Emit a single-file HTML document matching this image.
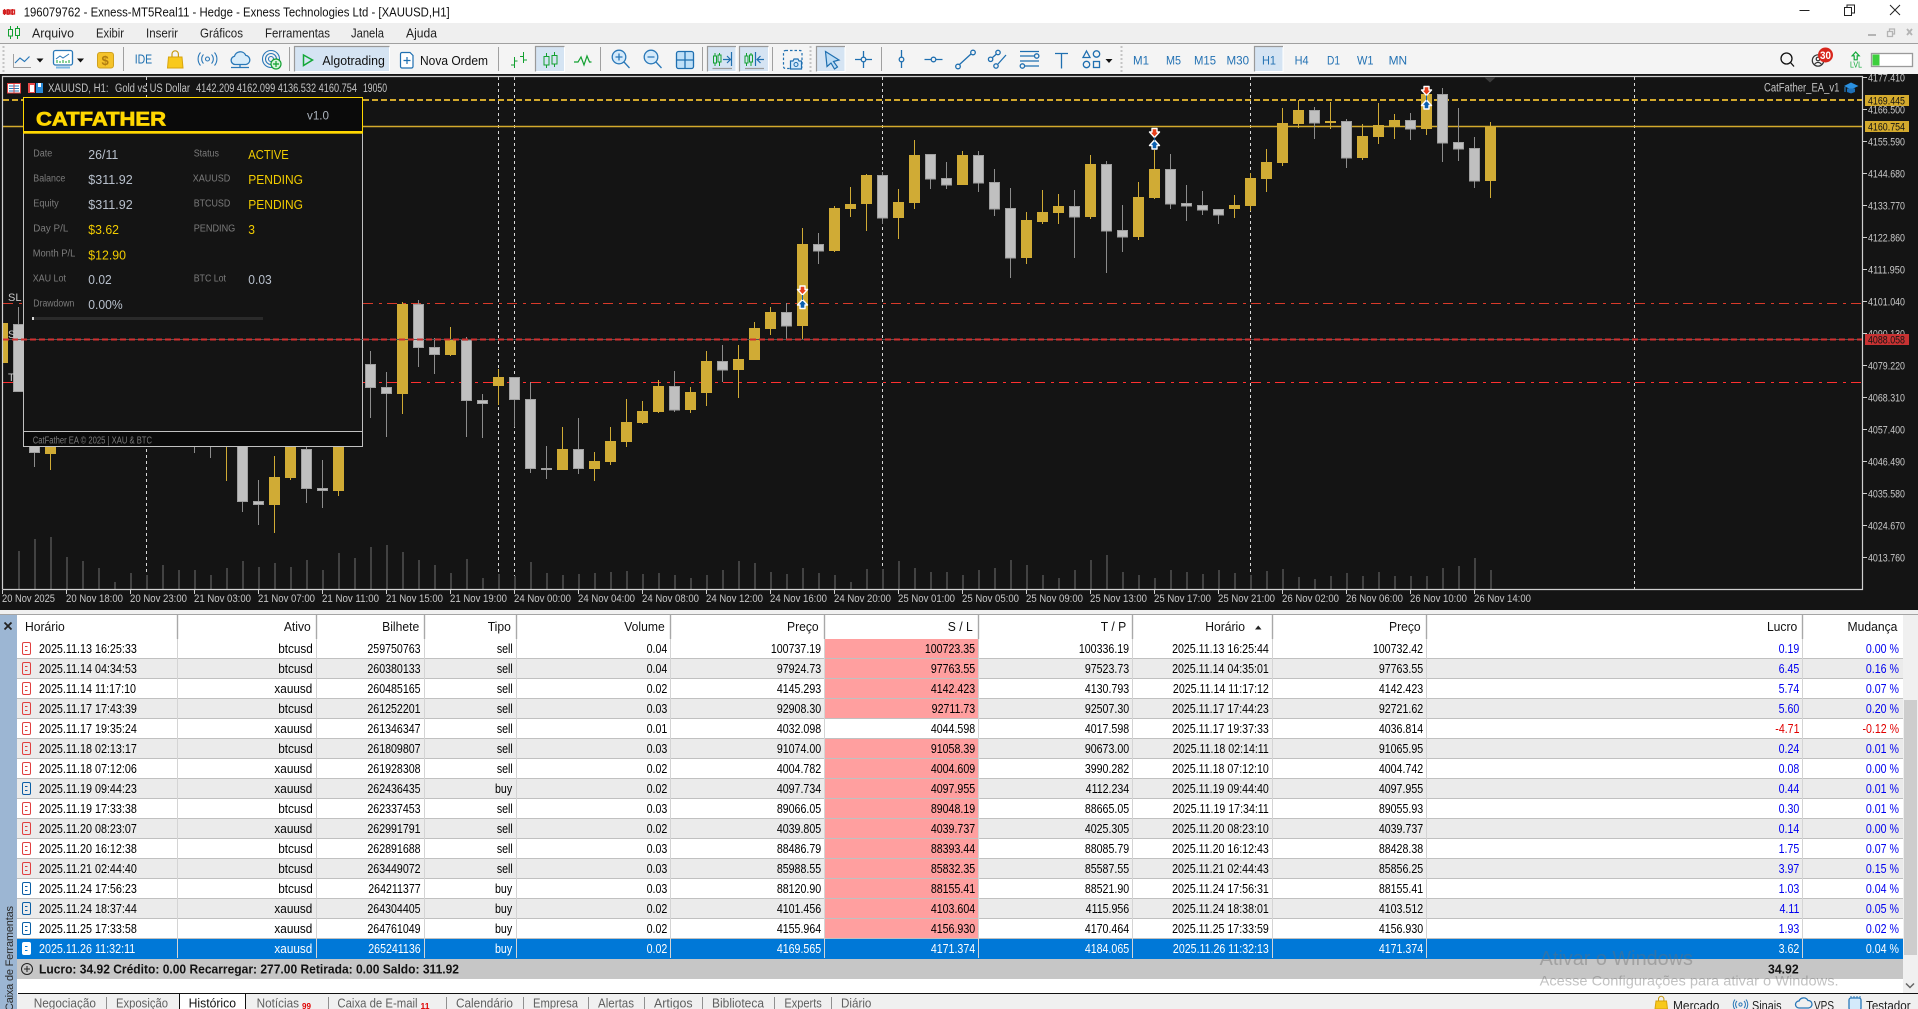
<!DOCTYPE html>
<html lang="pt"><head><meta charset="utf-8"><title>MT5</title>
<style>
html,body{margin:0;padding:0;background:#fff}
#p{position:relative;width:1918px;height:1009px;overflow:hidden;font-family:"Liberation Sans",sans-serif;background:#fff}
svg{position:absolute;left:0;top:0;font-family:"Liberation Sans",sans-serif}
#t{position:absolute;left:17px;top:639px;width:1886px}
.r{position:relative;height:20px;box-sizing:border-box;border-bottom:1px solid #c0c0c0;font-size:12.5px;line-height:20px;color:#000;background:#fff;white-space:nowrap}
.r:nth-child(even){background:#ebebeb}
.r.s::before{content:"";position:absolute;left:808px;width:153px;top:0;height:19px;background:#ff9f9f}
.r::after{--c:#e04040;content:"";position:absolute;left:5px;top:3px;width:7px;height:11px;border:1.5px solid var(--c);border-radius:2px;background:linear-gradient(var(--c),var(--c)) center 3px/2.5px 1px no-repeat,linear-gradient(var(--c),var(--c)) center 7px/2.5px 1px no-repeat}
.r.b::after{--c:#0a5fa5}
.r span{position:absolute;top:0;transform:scaleX(.85);transform-origin:100% 50%}
.r span:nth-child(1){left:22px;transform:scaleX(.86);transform-origin:0 50%}
.r span:nth-child(2){right:1590.5px;transform:scaleX(.94)}
.r span:nth-child(3){right:1482.5px}
.r span:nth-child(4){right:1390.4px}
.r span:nth-child(5){right:1236px}
.r span:nth-child(6){right:1082px}
.r span:nth-child(7){right:928px}
.r span:nth-child(8){right:774.2px}
.r span:nth-child(9){right:634px}
.r span:nth-child(10){right:480.3px}
.r span:nth-child(11){right:104px;color:#0000f0}
.r span:nth-child(12){right:4.2px;color:#0000f0}
.r span.n{color:#e00000!important}
.r.x{background:#0078d7!important;color:#fff;border-bottom:0}
.r.x span{color:#fff!important}
.r.x::after{--c:#fff;background:linear-gradient(#0078d7,#0078d7) center 3px/2.5px 1px no-repeat,linear-gradient(#0078d7,#0078d7) center 7px/2.5px 1px no-repeat,#fff}
#h{position:absolute;left:17px;top:615px;width:1886px;height:24px;background:#fff;font-size:12.5px;line-height:24px;color:#111;white-space:nowrap}
#h span{position:absolute;top:0;transform:scaleX(.97);transform-origin:100% 50%}
</style></head><body><div id="p">
<svg width="1918" height="1009" viewBox="0 0 1918 1009" xmlns="http://www.w3.org/2000/svg">
<!-- bars -->
<rect width="1918" height="23" fill="#fff"/>
<rect y="23" width="1918" height="20" fill="#efefef"/>
<rect y="43" width="1918" height="1" fill="#a0a0a0"/>
<rect y="44" width="1918" height="30" fill="#f4f4f4"/>
<!-- title icon -->
<g fill="none" stroke="#d42020" stroke-width="1.300"><path d="M4.500 9v6M3.500 10.500h2v3h-2zM8 9v6M7 10h2.500v4H7zM12.500 9v6M11 10h3.500v4H11z"/></g>
<text x="23.700" y="16.500" font-size="12.500" fill="#111" textLength="426" lengthAdjust="spacingAndGlyphs">196079762 - Exness-MT5Real11 - Hedge - Exness Technologies Ltd - [XAUUSD,H1]</text>
<g stroke="#222" fill="none" stroke-width="1"><path d="M1799.500 10.500h10"/><path d="M1844.500 7.500h7v8h-7zM1847 7.500v-2.500h7.500v8h-3"/><path d="M1890 5l10 10M1900 5l-10 10"/></g>
<!-- menu -->
<g fill="none" stroke="#12a030" stroke-width="1"><path d="M10.500 26v3M10.500 36v3M8.500 29.500h4v6.500h-4zM17.500 26v2.500M17.500 35.500v3.500M15.500 28.500h4v7h-4z"/></g>
<g font-size="12.500" fill="#222">
<text x="32" y="37.500" textLength="42" lengthAdjust="spacingAndGlyphs">Arquivo</text>
<text x="96" y="37.500" textLength="28" lengthAdjust="spacingAndGlyphs">Exibir</text>
<text x="146" y="37.500" textLength="32" lengthAdjust="spacingAndGlyphs">Inserir</text>
<text x="200" y="37.500" textLength="43" lengthAdjust="spacingAndGlyphs">Gráficos</text>
<text x="265" y="37.500" textLength="65" lengthAdjust="spacingAndGlyphs">Ferramentas</text>
<text x="351" y="37.500" textLength="33" lengthAdjust="spacingAndGlyphs">Janela</text>
<text x="406" y="37.500" textLength="31" lengthAdjust="spacingAndGlyphs">Ajuda</text>
</g>
<g fill="#b4b4b4"><rect x="1868" y="34" width="8" height="2"/></g>
<g fill="none" stroke="#b4b4b4" stroke-width="1.300"><path d="M1887.500 31.500h5v5h-5zM1889.500 31v-2h5v5h-2"/><path d="M1907 29l5 6M1912 29l-5 6" stroke-width="1.800"/></g>
<!-- toolbar pressed boxes -->
<g fill="#d5e4f3" stroke="#fff"><rect x="294.500" y="46.500" width="95" height="25"/><rect x="535.500" y="46.500" width="29" height="25"/><rect x="707.500" y="46.500" width="28.500" height="25"/><rect x="739.500" y="46.500" width="29" height="25"/><rect x="816.500" y="46.500" width="28.500" height="25"/><rect x="1254.500" y="46.500" width="28.500" height="25"/></g>
<path d="M294.500 71.500V46.500H389.500M535.500 71.500V46.500H564.500M707.500 71.500V46.500H736M739.500 71.500V46.500H768.500M816.500 71.500V46.500H845M1254.500 71.500V46.500H1283" fill="none" stroke="#9a9a9a" stroke-width="1.200"/>
<g stroke="#a0a0a0" fill="none"><path d="M123.500 47v24M289.500 47v24M498.500 47v24M600.500 47v24M702.500 47v24M772.500 47v24M881.500 47v24"/></g>
<path d="M3.500 46v26M810.500 46v26M1121.500 46v26" stroke="#c4c4c4" stroke-width="2" stroke-dasharray="2 2" fill="none"/>
<!-- toolbar icons -->
<path d="M13.500 54v13.500H31" stroke="#a0a0a0" fill="none"/>
<path d="M15 63l5-5 4.500 3.500 5-5" stroke="#2a78b8" stroke-width="1.200" fill="none"/>
<path d="M36.500 58.500h7l-3.500 4zM77 58.500h7l-3.500 4zM1105.500 59h7l-3.500 4z" fill="#111"/>
<rect x="53.500" y="50.500" width="19" height="14.500" rx="2" fill="#fff" stroke="#2a78b8" stroke-width="1.300"/>
<path d="M56 59l4-3 3 2 6-4" stroke="#2a78b8" fill="none"/>
<path d="M57 63v-3M60 63v-2M63 63v-3M66 63v-2M69 63v-3" stroke="#12a030" fill="none"/>
<path d="M56 67.500h14" stroke="#7cb8e4" stroke-width="2"/>
<rect x="97.500" y="52.500" width="16" height="15.500" rx="2.500" fill="#f5c32a" stroke="#cfa11e"/>
<text x="101.500" y="65" font-size="13" font-weight="bold" fill="#b07c10">$</text>
<text x="134.700" y="63.500" font-size="12.500" fill="#1d6fb0" textLength="17.500" lengthAdjust="spacingAndGlyphs">IDE</text>
<path d="M168.500 57h13.500l1 11h-15.500z" fill="#f8c91c" stroke="#d8a40e"/>
<path d="M172 57v-3a3.200 3.200 0 0 1 6.400 0v3" fill="none" stroke="#c69a12" stroke-width="1.200"/>
<g fill="none" stroke="#2a78b8" stroke-width="1.100"><circle cx="207.500" cy="59" r="2"/><path d="M203.500 54.500a6.500 6.500 0 0 0 0 9M211.500 54.500a6.500 6.500 0 0 1 0 9M200.500 52.500a10 10 0 0 0 0 13M214.500 52.500a10 10 0 0 1 0 13"/></g>
<path d="M235 64.500a4.200 4.200 0 0 1-.5-8.300 6 6 0 0 1 11.300-.8 4.600 4.600 0 0 1 .2 9.100zM240 64.500V67M231 67.500h18" fill="#d8ecfa" stroke="#2a78b8" stroke-width="1.300"/>
<g fill="none" stroke="#2a78b8" stroke-width="1.100"><circle cx="271" cy="59" r="8.500"/><circle cx="271" cy="59" r="5.500"/><circle cx="271" cy="59" r="2.500"/></g>
<circle cx="276" cy="64" r="5" fill="#d8f4dc" stroke="#12a030" stroke-width="1.200"/><path d="M276 61v6M273 64h6" stroke="#12a030" stroke-width="1.200"/>
<path d="M303.500 55l9 5-9 5.500z" fill="none" stroke="#14a838" stroke-width="1.500"/>
<text x="322.400" y="65" font-size="12.500" fill="#111" textLength="62.500" lengthAdjust="spacingAndGlyphs">Algotrading</text>
<path d="M400.500 54a1.500 1.500 0 0 1 1.500-1.500h8l3 3V66.500a1.500 1.500 0 0 1-1.500 1.500H402a1.500 1.500 0 0 1-1.500-1.500z" fill="#fff" stroke="#1f6fb0" stroke-width="1.200"/><path d="M407 57v7M403.500 60.500h7" stroke="#1f6fb0" stroke-width="1.200"/>
<text x="420" y="65" font-size="12.500" fill="#111" textLength="68" lengthAdjust="spacingAndGlyphs">Nova Ordem</text>
<g fill="none" stroke="#12a030" stroke-width="1"><path d="M514.500 57v11M511 65h3.500M514.500 61h3M523.500 52v11M520 56.500h3.500M523.500 60h3.500"/><path d="M546.500 53v3M546.500 65v3M544 56.500h5v8.500h-5zM554.500 52v3M554.500 64v3M552 55.500h5v8.500h-5z"/><path d="M574 62h4l3-5 3 8 3-9 2.500 6h2" stroke-width="1.200"/></g>
<g fill="#d4eafb" stroke="#2a78b8" stroke-width="1.300"><circle cx="619" cy="57" r="6.800"/><path d="M624 62l5.500 6M615.500 57h7M619 53.500v7" fill="none"/><circle cx="651" cy="57" r="6.800"/><path d="M656 62l5.500 6M647.500 57h7" fill="none"/></g>
<rect x="676.500" y="51.500" width="17" height="17" rx="2" fill="#bfe0f8" stroke="#1f6fb0" stroke-width="1.300"/><path d="M685 51.500v17M676.500 60h17" stroke="#1f6fb0" stroke-width="1.300"/>
<g fill="none" stroke="#12a030" stroke-width="1"><path d="M715 53v3M715 63v3M713.500 56h3v7h-3zM719.500 53v2M719.500 62v4M718 55h3v7h-3z"/><path d="M746.500 53v3M746.500 63v3M745 56h3v7h-3zM751 53v2M751 62v4M749.500 55h3v7h-3z"/></g>
<g fill="none" stroke="#1f6fb0" stroke-width="1.200"><path d="M723 59.500h7M727 56l3.500 3.500-3.500 3.500M731.500 52v14"/><path d="M755.500 52v14M764 59.500h-6.500M760.500 56l-3.500 3.500 3.500 3.500"/></g>
<path d="M712.500 68.500h19.500M745 68.500h19" stroke="#9a9a9a" stroke-width="1.200"/>
<rect x="783.500" y="50.500" width="18.500" height="18" rx="2" fill="none" stroke="#1f6fb0" stroke-width="1.200" stroke-dasharray="2.500 2"/>
<path d="M790.500 61h2.500l1-2h4l1 2h2.500v8h-11z" fill="#d4eafb" stroke="#1f6fb0" stroke-width="1.200"/><circle cx="796" cy="64.500" r="2" fill="none" stroke="#1f6fb0"/>
<path d="M825.500 51.500l13.500 8.500-5.500 1.500 4 5.500-3 2-3.500-6-4 3.500z" fill="#bcdcf5" stroke="#1f6fb0" stroke-width="1.200"/>
<g fill="none" stroke="#1f6fb0" stroke-width="1.300">
<path d="M863.500 51v6M863.500 62v6M855 59.500h6M866 59.500h6"/><circle cx="863.500" cy="59.500" r="2.300"/>
<path d="M901.500 50v7M901.500 62v6"/><circle cx="901.500" cy="59.500" r="2.300"/>
<path d="M924.500 59.500h6.500M936 59.500h6.500"/><circle cx="933.500" cy="59.500" r="2.300"/>
<path d="M959.500 64.500l11.500-10.500"/><circle cx="958" cy="66.500" r="2.300"/><circle cx="973" cy="52.500" r="2.300"/>
<path d="M992.500 57.500l4-3.500M998 64l8-9"/><circle cx="990.600" cy="59.300" r="2.200"/><circle cx="998" cy="52.500" r="2.200"/><circle cx="996" cy="66" r="2.200"/>
<path d="M1020 51.500h19M1020 56h14.500M1020 61h19M1025 66h14"/><circle cx="1036.700" cy="56" r="2.200"/><circle cx="1022.400" cy="66" r="2.200"/>
<path d="M1055 53.500h13M1061.500 53.500v15"/>
<path d="M1086.500 51l3.500 6.500h-7z"/><circle cx="1096.500" cy="54" r="3.200"/><circle cx="1086.500" cy="64.500" r="3.200"/><rect x="1093.500" y="61.500" width="6" height="6"/>
</g>
<g font-size="12" fill="#2271b3">
<text x="1133" y="64.500" textLength="16" lengthAdjust="spacingAndGlyphs">M1</text>
<text x="1166" y="64.500" textLength="15" lengthAdjust="spacingAndGlyphs">M5</text>
<text x="1194" y="64.500" textLength="22" lengthAdjust="spacingAndGlyphs">M15</text>
<text x="1226.500" y="64.500" textLength="22.500" lengthAdjust="spacingAndGlyphs">M30</text>
<text x="1262" y="64.500" textLength="14" lengthAdjust="spacingAndGlyphs">H1</text>
<text x="1294.600" y="64.500" textLength="14" lengthAdjust="spacingAndGlyphs">H4</text>
<text x="1327" y="64.500" textLength="13" lengthAdjust="spacingAndGlyphs">D1</text>
<text x="1357" y="64.500" textLength="16.500" lengthAdjust="spacingAndGlyphs">W1</text>
<text x="1388.600" y="64.500" textLength="18.500" lengthAdjust="spacingAndGlyphs">MN</text>
</g>
<g fill="none" stroke="#111" stroke-width="1.300"><circle cx="1786.500" cy="58.500" r="5.500"/><path d="M1790.500 62.500l3.500 4"/></g>
<g fill="none" stroke="#333" stroke-width="1.200"><circle cx="1818" cy="60.500" r="5.700"/><circle cx="1818" cy="59" r="1.800"/><path d="M1814.500 64.500a4 4 0 0 1 7 0"/></g>
<circle cx="1825.500" cy="55" r="7.500" fill="#d8261c"/>
<text x="1820" y="59" font-size="11" font-weight="bold" fill="#fff" textLength="11" lengthAdjust="spacingAndGlyphs">30</text>
<path d="M1855.700 52l3.500 3.800h-2v4h-3v-4h-2z" fill="none" stroke="#10a838" stroke-width="1.200"/>
<text x="1850" y="67.500" font-size="8.500" fill="#10a838" textLength="12" lengthAdjust="spacingAndGlyphs">LVL</text>
<rect x="1871.500" y="53.500" width="41" height="13" fill="#fff" stroke="#9a9a9a" stroke-width="1.300"/>
<rect x="1872.500" y="54.500" width="7" height="11" fill="#3ccf3c"/>

<!-- CHART -->
<rect y="74" width="1918" height="536" fill="#141414"/>
<path d="M146.500 77V589M498.500 77V589M514.500 77V589M882.500 77V589M1250.500 77V589M1634.500 77V589" stroke="#d8d8d8" stroke-dasharray="3 3" fill="none"/>
<path d="M3 303.500H1862" stroke="#d83a2a" stroke-dasharray="10 6 3 5" fill="none"/>
<path d="M3 382.500H1862" stroke="#ff3030" stroke-dasharray="10 6 3 5" fill="none"/>
<path d="M3 100H1862" stroke="#d4aa2d" stroke-width="2" stroke-dasharray="6 3" fill="none"/>
<path d="M3 126.500H1862" stroke="#d4aa2d" stroke-width="1.400" fill="none"/>
<path d="M19 589V551M35 589V539M51 589V537M67 589V557M83 589V561M99 589V568M115 589V582M131 589V573M147 589V575M163 589V565M179 589V570M195 589V570M211 589V575M227 589V568M243 589V561M259 589V567M275 589V563M291 589V567M307 589V560M323 589V570M339 589V553M355 589V558M371 589V547M387 589V545M403 589V552M419 589V560M435 589V565M451 589V573M467 589V559M483 589V578M499 589V574M515 589V576M531 589V562M547 589V573M563 589V575M579 589V574M595 589V573M611 589V572M627 589V571M643 589V574M659 589V573M675 589V575M691 589V578M707 589V575M723 589V570M739 589V561M755 589V563M771 589V572M787 589V574M803 589V568M819 589V573M835 589V575M851 589V582M867 589V569M883 589V569M899 589V561M915 589V568M931 589V572M947 589V572M963 589V575M979 589V570M995 589V568M1011 589V560M1027 589V565M1043 589V575M1059 589V578M1075 589V570M1091 589V560M1107 589V555M1123 589V572M1139 589V575M1155 589V578M1171 589V570M1187 589V572M1203 589V574M1219 589V570M1235 589V573M1251 589V575M1267 589V571M1283 589V569M1299 589V577M1315 589V579M1331 589V576M1347 589V573M1363 589V576M1379 589V572M1395 589V576M1411 589V576M1427 589V576M1443 589V568M1459 589V566M1475 589V558M1491 589V570" stroke="#424242" stroke-width="2" fill="none"/>
<path d="M226.500 440V481M50.500 440V470M274.500 456V533M290.500 440V480M338.500 440V496M402.500 302V414M450.500 327V356M498.500 369V405M562.500 427V470M594.500 452V481M610.500 427V465M626.500 399V447M642.500 401V424M658.500 380V413M690.500 387V413M706.500 351V406M738.500 345V398M754.500 322V360M770.500 307V335M802.500 228V339M834.500 206V252M850.500 187V217M866.500 174V231M898.500 189V239M914.500 140V209M962.500 151V185M1026.500 212V264M1042.500 190V224M1058.500 194V224M1090.500 155V219M1138.500 182V240M1154.500 150V199M1234.500 195V218M1250.500 173V211M1266.500 149V192M1282.500 108V166M1298.500 100V128M1330.500 102V129M1362.500 124V160M1378.500 103V144M1394.500 114V139M1426.500 90V135M1490.500 122V198" stroke="#d0ab35" fill="none"/>
<path d="M18.500 307V330M34.500 440V467M194.500 440V453M210.500 440V458M242.500 440V512M258.500 480V525M306.500 440V503M322.500 460V508M370.500 351V418M386.500 372V437M418.500 300V367M434.500 338V374M466.500 337V437M482.500 394V438M514.500 377V427M530.500 382V473M546.500 446V479M578.500 418V474M674.500 371V412M722.500 345V382M786.500 303V339M818.500 233V264M882.500 172V224M930.500 154V189M946.500 162V189M978.500 151V192M994.500 169V216M1010.500 188V278M1074.500 190V258M1106.500 161V273M1122.500 205V252M1170.500 154V209M1186.500 185V221M1202.500 191V215M1218.500 209V224M1314.500 107V139M1346.500 119V168M1410.500 113V140M1442.500 88V162M1458.500 108V161M1474.500 137V188" stroke="#8c8c8c" fill="none"/>
<path d="M3 323h5V363h-5zM45 440h11V454h-11zM269 477h11V505h-11zM285 440h11V478h-11zM333 440h11V491h-11zM397 304h11V394h-11zM445 340h11V355h-11zM493 377h11V386h-11zM557 449h11V470h-11zM589 461h11V469h-11zM605 441h11V462h-11zM621 422h11V442h-11zM637 411h11V423h-11zM653 386h11V412h-11zM685 392h11V410h-11zM701 361h11V393h-11zM733 359h11V370h-11zM749 328h11V360h-11zM765 312h11V329h-11zM797 244h11V326h-11zM829 208h11V251h-11zM845 204h11V209h-11zM861 175h11V204h-11zM893 202h11V218h-11zM909 155h11V203h-11zM957 155h11V185h-11zM1021 220h11V258h-11zM1037 212h11V222h-11zM1053 206h11V213h-11zM1085 164h11V217h-11zM1133 197h11V237h-11zM1149 169h11V198h-11zM1229 205h11V209h-11zM1245 178h11V206h-11zM1261 162h11V179h-11zM1277 123h11V163h-11zM1293 110h11V124h-11zM1325 121h11V123h-11zM1357 136h11V158h-11zM1373 125h11V137h-11zM1389 120h11V127h-11zM1421 94h11V129h-11zM1485 127h11V181h-11z" fill="#d0ab35"/>
<path d="M13.500 324.500h10V391.500h-10zM29.500 440.500h10V452.500h-10zM237.500 440.500h10V501.500h-10zM253.500 501.500h10V504.500h-10zM301.500 449.500h10V488.500h-10zM317.500 488.500h10V490.500h-10zM365.500 364.500h10V387.500h-10zM381.500 387.500h10V393.500h-10zM413.500 304.500h10V347.500h-10zM429.500 347.500h10V354.500h-10zM461.500 340.500h10V400.500h-10zM477.500 400.500h10V403.500h-10zM509.500 377.500h10V399.500h-10zM525.500 399.500h10V468.500h-10zM541.500 468.500h10V469.500h-10zM573.500 449.500h10V468.500h-10zM669.500 386.500h10V410h-10zM717.500 361.500h10V370h-10zM781.500 312.500h10V326h-10zM813.500 244.500h10V251h-10zM877.500 175.500h10V218h-10zM925.500 154.500h10V179h-10zM941.500 178.500h10V185h-10zM973.500 155.500h10V183h-10zM989.500 182.500h10V209h-10zM1005.500 208.500h10V258h-10zM1069.500 206.500h10V217h-10zM1101.500 164.500h10V231h-10zM1117.500 230.500h10V237h-10zM1165.500 169.500h10V204h-10zM1181.500 203.500h10V206h-10zM1197.500 205.500h10V210h-10zM1213.500 209.500h10V215h-10zM1309.500 110.500h10V123h-10zM1341.500 121.500h10V158h-10zM1405.500 120.500h10V129h-10zM1437.500 94.500h10V143h-10zM1453.500 142.500h10V149h-10zM1469.500 148.500h10V181h-10z" fill="#c0c0c0" stroke="#a0a0a0"/>
<!-- SL / TP labels -->
<g fill="#c8c8c8" font-size="11"><text x="8" y="301">SL</text><text x="8" y="338">S</text><text x="8" y="381">T</text></g>
<!-- markers -->
<g stroke="#fff" stroke-width="1.400" stroke-linejoin="round">
<path fill="#e8401c" d="M797.500 289.500h2.500v-3.500h5v3.500h2.500l-5 5.500z"/>
<path fill="#0a5fb0" d="M802.500 299.500l5 5.500h-2.500v3.500h-5v-3.500h-2.500z"/>
<path fill="#e8401c" d="M1149.500 132h2.500v-3.500h5v3.500h2.500l-5 5.500z"/>
<path fill="#0a5fb0" d="M1154.500 140l5 5.500h-2.500v3.500h-5v-3.500h-2.500z"/>
<path fill="#e8401c" d="M1421.500 90h2.500v-3.500h5v3.500h2.500l-5 5.500z"/>
<path fill="#0a5fb0" d="M1426.500 100l5 5.500h-2.500v3.500h-5v-3.500h-2.500z"/>
</g>
<path d="M802.500 295v5M1154.500 137.500v3M1426.500 95.500v5" stroke="#0a5fb0"/>
<!-- axis -->
<path d="M2.500 589.500V76.500H1862.500V589.500H2.500" fill="none" stroke="#d0d0d0" stroke-width="1.200"/>
<path d="M1862 77.500h5M1862 109.500h5M1862 141.500h5M1862 173.500h5M1862 205.500h5M1862 237.500h5M1862 269.500h5M1862 301.500h5M1862 333.500h5M1862 365.500h5M1862 397.500h5M1862 429.500h5M1862 461.500h5M1862 493.500h5M1862 525.500h5M1862 557.500h5" stroke="#d0d0d0" fill="none"/>
<path d="M2.500 590v4M66.500 590v4M130.500 590v4M194.500 590v4M258.500 590v4M322.500 590v4M386.500 590v4M450.500 590v4M514.500 590v4M578.500 590v4M642.500 590v4M706.500 590v4M770.500 590v4M834.500 590v4M898.500 590v4M962.500 590v4M1026.500 590v4M1090.500 590v4M1154.500 590v4M1218.500 590v4M1282.500 590v4M1346.500 590v4M1410.500 590v4M1474.500 590v4" stroke="#d0d0d0" fill="none"/>
<path d="M1484 77h12l-6 5.500z" fill="#3c3c3c"/>
<g font-size="11" fill="#c8c8c8">
<text x="1868" y="81.500" textLength="37" lengthAdjust="spacingAndGlyphs">4177.410</text>
<text x="1868" y="113.500" textLength="37" lengthAdjust="spacingAndGlyphs">4166.500</text>
<text x="1868" y="145.500" textLength="37" lengthAdjust="spacingAndGlyphs">4155.590</text>
<text x="1868" y="177.500" textLength="37" lengthAdjust="spacingAndGlyphs">4144.680</text>
<text x="1868" y="209.500" textLength="37" lengthAdjust="spacingAndGlyphs">4133.770</text>
<text x="1868" y="241.500" textLength="37" lengthAdjust="spacingAndGlyphs">4122.860</text>
<text x="1868" y="273.500" textLength="37" lengthAdjust="spacingAndGlyphs">4111.950</text>
<text x="1868" y="305.500" textLength="37" lengthAdjust="spacingAndGlyphs">4101.040</text>
<text x="1868" y="337.500" textLength="37" lengthAdjust="spacingAndGlyphs">4090.130</text>
<text x="1868" y="369.500" textLength="37" lengthAdjust="spacingAndGlyphs">4079.220</text>
<text x="1868" y="401.500" textLength="37" lengthAdjust="spacingAndGlyphs">4068.310</text>
<text x="1868" y="433.500" textLength="37" lengthAdjust="spacingAndGlyphs">4057.400</text>
<text x="1868" y="465.500" textLength="37" lengthAdjust="spacingAndGlyphs">4046.490</text>
<text x="1868" y="497.500" textLength="37" lengthAdjust="spacingAndGlyphs">4035.580</text>
<text x="1868" y="529.500" textLength="37" lengthAdjust="spacingAndGlyphs">4024.670</text>
<text x="1868" y="561.500" textLength="37" lengthAdjust="spacingAndGlyphs">4013.760</text>
</g>
<g font-size="11" fill="#c8c8c8">
<text x="2" y="602" textLength="53" lengthAdjust="spacingAndGlyphs">20 Nov 2025</text>
<text x="66" y="602" textLength="57" lengthAdjust="spacingAndGlyphs">20 Nov 18:00</text>
<text x="130" y="602" textLength="57" lengthAdjust="spacingAndGlyphs">20 Nov 23:00</text>
<text x="194" y="602" textLength="57" lengthAdjust="spacingAndGlyphs">21 Nov 03:00</text>
<text x="258" y="602" textLength="57" lengthAdjust="spacingAndGlyphs">21 Nov 07:00</text>
<text x="322" y="602" textLength="57" lengthAdjust="spacingAndGlyphs">21 Nov 11:00</text>
<text x="386" y="602" textLength="57" lengthAdjust="spacingAndGlyphs">21 Nov 15:00</text>
<text x="450" y="602" textLength="57" lengthAdjust="spacingAndGlyphs">21 Nov 19:00</text>
<text x="514" y="602" textLength="57" lengthAdjust="spacingAndGlyphs">24 Nov 00:00</text>
<text x="578" y="602" textLength="57" lengthAdjust="spacingAndGlyphs">24 Nov 04:00</text>
<text x="642" y="602" textLength="57" lengthAdjust="spacingAndGlyphs">24 Nov 08:00</text>
<text x="706" y="602" textLength="57" lengthAdjust="spacingAndGlyphs">24 Nov 12:00</text>
<text x="770" y="602" textLength="57" lengthAdjust="spacingAndGlyphs">24 Nov 16:00</text>
<text x="834" y="602" textLength="57" lengthAdjust="spacingAndGlyphs">24 Nov 20:00</text>
<text x="898" y="602" textLength="57" lengthAdjust="spacingAndGlyphs">25 Nov 01:00</text>
<text x="962" y="602" textLength="57" lengthAdjust="spacingAndGlyphs">25 Nov 05:00</text>
<text x="1026" y="602" textLength="57" lengthAdjust="spacingAndGlyphs">25 Nov 09:00</text>
<text x="1090" y="602" textLength="57" lengthAdjust="spacingAndGlyphs">25 Nov 13:00</text>
<text x="1154" y="602" textLength="57" lengthAdjust="spacingAndGlyphs">25 Nov 17:00</text>
<text x="1218" y="602" textLength="57" lengthAdjust="spacingAndGlyphs">25 Nov 21:00</text>
<text x="1282" y="602" textLength="57" lengthAdjust="spacingAndGlyphs">26 Nov 02:00</text>
<text x="1346" y="602" textLength="57" lengthAdjust="spacingAndGlyphs">26 Nov 06:00</text>
<text x="1410" y="602" textLength="57" lengthAdjust="spacingAndGlyphs">26 Nov 10:00</text>
<text x="1474" y="602" textLength="57" lengthAdjust="spacingAndGlyphs">26 Nov 14:00</text>
</g>
<!-- chart header -->
<rect x="7.500" y="83.500" width="13" height="9.500" fill="#fff" stroke="#e04040"/><path d="M9 86h10M9 88.500h10M9 91h10" stroke="#2a78b8"/><path d="M14 84v9" stroke="#e04040"/>
<rect x="28" y="83" width="7" height="10" fill="#e84a4a"/><rect x="30" y="85" width="4" height="7" fill="#fff"/><rect x="36" y="83" width="7" height="10" fill="#2a8ad8"/><rect x="38" y="83" width="3" height="4" fill="#fff"/>
<g font-size="11.500" fill="#c4c4c4">
<text x="48" y="92" textLength="60.600" lengthAdjust="spacingAndGlyphs">XAUUSD, H1:</text>
<text x="115" y="92" textLength="75" lengthAdjust="spacingAndGlyphs">Gold vs US Dollar</text>
<text x="196" y="92" textLength="161" lengthAdjust="spacingAndGlyphs">4142.209 4162.099 4136.532 4160.754</text>
<text x="363" y="92" textLength="24" lengthAdjust="spacingAndGlyphs">19050</text>
<text x="1764" y="91.500" textLength="75.400" lengthAdjust="spacingAndGlyphs">CatFather_EA_v1</text>
</g>
<path d="M1851 82.500l7.500 3.500-7.500 3.500-7-3.500z" fill="#2a90e0"/><path d="M1847 88.500v3.500l4 1.500 4-1.500v-3.500" fill="#1e70b8"/><path d="M1845 87v5" stroke="#2a90e0"/>
<!-- tags -->
<rect x="1865" y="95" width="44" height="11" fill="#d4aa2d"/><rect x="1865" y="121" width="44" height="11" fill="#d4aa2d"/><rect x="1865" y="334" width="44" height="11" fill="#c83232"/>
<g font-size="11" fill="#141414">
<text x="1868" y="104.500" textLength="37" lengthAdjust="spacingAndGlyphs">4169.445</text>
<text x="1868" y="130.500" textLength="37" lengthAdjust="spacingAndGlyphs">4160.754</text>
<text x="1868" y="343.500" textLength="37" lengthAdjust="spacingAndGlyphs">4088.058</text>
</g>
<!-- PANEL -->
<rect x="23.500" y="133" width="339" height="313.500" fill="#141414" stroke="#c0c0c0"/>
<rect x="23.500" y="97.500" width="339" height="35" fill="#0a0a0a" stroke="#ffd700"/>
<rect x="23" y="131" width="340" height="2.700" fill="#ffd700"/>
<rect x="24" y="432" width="338" height="14" fill="#0a0a0a"/><path d="M23.500 431.500H362.500" stroke="#c0c0c0"/>
<text x="36" y="125.700" font-size="19.500" font-weight="bold" fill="#ffd700" stroke="#ffd700" stroke-width=".7" textLength="130" lengthAdjust="spacingAndGlyphs">CATFATHER</text>
<text x="307" y="119.500" font-size="12" fill="#aab2bc" textLength="22" lengthAdjust="spacingAndGlyphs">v1.0</text>
<g font-size="10" fill="#7c7c7c">
<text x="33.300" y="156.500" textLength="19" lengthAdjust="spacingAndGlyphs">Date</text>
<text x="33.300" y="181.500" textLength="32" lengthAdjust="spacingAndGlyphs">Balance</text>
<text x="33.300" y="206.500" textLength="25.400" lengthAdjust="spacingAndGlyphs">Equity</text>
<text x="33.300" y="231.500" textLength="35" lengthAdjust="spacingAndGlyphs">Day P/L</text>
<text x="32.700" y="256.500" textLength="42.600" lengthAdjust="spacingAndGlyphs">Month P/L</text>
<text x="32.700" y="281.500" textLength="33.300" lengthAdjust="spacingAndGlyphs">XAU Lot</text>
<text x="33.300" y="306.500" textLength="41" lengthAdjust="spacingAndGlyphs">Drawdown</text>
<text x="193.700" y="156.500" textLength="25.300" lengthAdjust="spacingAndGlyphs">Status</text>
<text x="192.700" y="181.500" textLength="37.600" lengthAdjust="spacingAndGlyphs">XAUUSD</text>
<text x="193.700" y="206.500" textLength="36.600" lengthAdjust="spacingAndGlyphs">BTCUSD</text>
<text x="193.700" y="231.500" textLength="41.600" lengthAdjust="spacingAndGlyphs">PENDING</text>
<text x="193.700" y="281.500" textLength="32.300" lengthAdjust="spacingAndGlyphs">BTC Lot</text>
</g>
<g font-size="13" fill="#b8c0cc">
<text x="88.300" y="159" textLength="30" lengthAdjust="spacingAndGlyphs">26/11</text>
<text x="88.300" y="184" textLength="44.400" lengthAdjust="spacingAndGlyphs">$311.92</text>
<text x="88.300" y="209" textLength="44.400" lengthAdjust="spacingAndGlyphs">$311.92</text>
<text x="88.300" y="284" textLength="23.400" lengthAdjust="spacingAndGlyphs">0.02</text>
<text x="88.300" y="309" textLength="34.400" lengthAdjust="spacingAndGlyphs">0.00%</text>
<text x="248.300" y="284" textLength="23.400" lengthAdjust="spacingAndGlyphs">0.03</text>
</g>
<g font-size="13" fill="#f2cc00">
<text x="88.300" y="234" textLength="30.700" lengthAdjust="spacingAndGlyphs">$3.62</text>
<text x="88.300" y="259.500" textLength="37.700" lengthAdjust="spacingAndGlyphs">$12.90</text>
<text x="248.300" y="159" textLength="40.400" lengthAdjust="spacingAndGlyphs">ACTIVE</text>
<text x="248.300" y="184" textLength="54.700" lengthAdjust="spacingAndGlyphs">PENDING</text>
<text x="248.300" y="209" textLength="54.700" lengthAdjust="spacingAndGlyphs">PENDING</text>
<text x="248.300" y="234" textLength="6.700" lengthAdjust="spacingAndGlyphs">3</text>
</g>
<rect x="32" y="317" width="231" height="3" fill="#2a2a2a"/><rect x="32" y="317" width="2" height="3" fill="#d8d8d8"/>
<text x="32.700" y="443.500" font-size="10" fill="#7c7c7c" textLength="119.300" lengthAdjust="spacingAndGlyphs">CatFather EA © 2025 | XAU &amp; BTC</text>
<!-- dashed price line over panel -->
<path d="M3 339.500H1862" stroke="#555" fill="none"/>
<path d="M3 339.500H1862" stroke="#d03030" stroke-width="2" stroke-dasharray="6 3" fill="none"/>

<!-- table chrome -->
<rect y="610" width="1918" height="4" fill="#f0f0f0"/>
<rect y="614" width="1918" height="1" fill="#a4a4a4"/>
<rect y="615" width="17" height="394" fill="#9cb6d3"/>
<path d="M4.500 622.500l7 7M11.500 622.500l-7 7" stroke="#222" stroke-width="1.800"/>
<text transform="rotate(-90 13 1011)" x="13" y="1011" font-size="11" fill="#2a2a2a" textLength="105" lengthAdjust="spacing">Caixa de Ferramentas</text>
<rect x="1903" y="615" width="15" height="378" fill="#f0f0f0"/>
<rect x="1904" y="700" width="13" height="255" fill="#cdcdcd"/>
<path d="M1906 983.500l4 4 4-4" fill="none" stroke="#666" stroke-width="1.500"/>
<rect x="17" y="958" width="1886" height="21" fill="#c6c6c6"/>
<circle cx="27" cy="969" r="5.500" fill="none" stroke="#222"/><path d="M27 966v6M24 969h6" stroke="#222"/>
<text x="39" y="973.500" font-size="12.500" font-weight="bold" fill="#111" textLength="420" lengthAdjust="spacingAndGlyphs">Lucro: 34.92  Crédito: 0.00  Recarregar: 277.00  Retirada: 0.00  Saldo: 311.92</text>
<text x="1768" y="973.500" font-size="12.500" font-weight="bold" fill="#111" textLength="30.700" lengthAdjust="spacingAndGlyphs">34.92</text>
<!-- tabs -->
<rect x="17" y="994" width="1901" height="15" fill="#f0f0f0"/>
<rect x="18" y="993" width="1900" height="1" fill="#111"/>
<path d="M179.500 1009V993.500H245.500V1009" fill="#fff" stroke="#111"/>
<g font-size="12.500" fill="#606060">
<text x="33.700" y="1007.500" textLength="62.300" lengthAdjust="spacingAndGlyphs">Negociação</text>
<text x="116" y="1007.500" textLength="52" lengthAdjust="spacingAndGlyphs">Exposição</text>
<text x="188.600" y="1007.500" fill="#111" textLength="47.400" lengthAdjust="spacingAndGlyphs">Histórico</text>
<text x="256.600" y="1007.500" textLength="42.400" lengthAdjust="spacingAndGlyphs">Notícias</text>
<text x="337.400" y="1007.500" textLength="80.200" lengthAdjust="spacingAndGlyphs">Caixa de E-mail</text>
<text x="456" y="1007.500" textLength="57" lengthAdjust="spacingAndGlyphs">Calendário</text>
<text x="533" y="1007.500" textLength="45" lengthAdjust="spacingAndGlyphs">Empresa</text>
<text x="598" y="1007.500" textLength="36" lengthAdjust="spacingAndGlyphs">Alertas</text>
<text x="654" y="1007.500" textLength="38.600" lengthAdjust="spacingAndGlyphs">Artigos</text>
<text x="712" y="1007.500" textLength="52" lengthAdjust="spacingAndGlyphs">Biblioteca</text>
<text x="784.400" y="1007.500" textLength="37.400" lengthAdjust="spacingAndGlyphs">Experts</text>
<text x="841" y="1007.500" textLength="30.400" lengthAdjust="spacingAndGlyphs">Diário</text>
</g>
<g font-size="8" font-weight="bold" fill="#e00000"><text x="302" y="1009" textLength="9" lengthAdjust="spacingAndGlyphs">99</text><text x="420.500" y="1009" textLength="9" lengthAdjust="spacingAndGlyphs">11</text></g>
<path d="M106.500 997v12M328.500 997v12M446.500 997v12M523.500 997v12M588.500 997v12M644.500 997v12M702.500 997v12M774.500 997v12M831.500 997v12" stroke="#909090" fill="none"/>
<!-- bottom right -->
<path d="M1656 1001h10.500l1 8h-12.500z" fill="#f8c91c" stroke="#d8a40e"/><path d="M1658.500 1001v-2a2.700 2.700 0 0 1 5.400 0v2" fill="none" stroke="#c69a12"/>
<g fill="none" stroke="#2a78b8"><circle cx="1740.500" cy="1004.500" r="1.600"/><path d="M1737 1001a5 5 0 0 0 0 7M1744 1001a5 5 0 0 1 0 7M1735 999.500a8 8 0 0 0 0 10M1746 999.500a8 8 0 0 1 0 10"/>
<path d="M1799 1008a3.500 3.500 0 0 1 0-7 5 5 0 0 1 9-.5 3.700 3.700 0 0 1 .5 7.500z" stroke-width="1.300"/>
<rect x="1849" y="998" width="12" height="12" rx="2" fill="#d4eafb" stroke-width="1.300"/><path d="M1851 996v2M1854 996v2M1857 996v2M1860 996v2"/></g>
<g font-size="12.500" fill="#222">
<text x="1673" y="1010" textLength="46.400" lengthAdjust="spacingAndGlyphs">Mercado</text>
<text x="1752" y="1010" textLength="29.600" lengthAdjust="spacingAndGlyphs">Sinais</text>
<text x="1814" y="1010" textLength="20" lengthAdjust="spacingAndGlyphs">VPS</text>
<text x="1866" y="1010" textLength="44.600" lengthAdjust="spacingAndGlyphs">Testador</text>
</g>
</svg>

<div id="h">
<span style="left:7.500px;transform-origin:0 50%">Horário</span>
<span style="right:1592.400px">Ativo</span>
<span style="right:1484px">Bilhete</span>
<span style="right:1392.400px">Tipo</span>
<span style="right:1238px">Volume</span>
<span style="right:1084.400px">Preço</span>
<span style="right:930.400px">S / L</span>
<span style="right:777px">T / P</span>
<span style="right:658.400px">Horário</span>
<span style="right:482.400px">Preço</span>
<span style="right:106px">Lucro</span>
<span style="right:6px">Mudança</span>
</div>

<div id="t">
<div class="r s"><span>2025.11.13 16:25:33</span><span>btcusd</span><span>259750763</span><span>sell</span><span>0.04</span><span>100737.19</span><span>100723.35</span><span>100336.19</span><span>2025.11.13 16:25:44</span><span>100732.42</span><span>0.19</span><span>0.00 %</span></div>
<div class="r s"><span>2025.11.14 04:34:53</span><span>btcusd</span><span>260380133</span><span>sell</span><span>0.04</span><span>97924.73</span><span>97763.55</span><span>97523.73</span><span>2025.11.14 04:35:01</span><span>97763.55</span><span>6.45</span><span>0.16 %</span></div>
<div class="r s"><span>2025.11.14 11:17:10</span><span>xauusd</span><span>260485165</span><span>sell</span><span>0.02</span><span>4145.293</span><span>4142.423</span><span>4130.793</span><span>2025.11.14 11:17:12</span><span>4142.423</span><span>5.74</span><span>0.07 %</span></div>
<div class="r s"><span>2025.11.17 17:43:39</span><span>btcusd</span><span>261252201</span><span>sell</span><span>0.03</span><span>92908.30</span><span>92711.73</span><span>92507.30</span><span>2025.11.17 17:44:23</span><span>92721.62</span><span>5.60</span><span>0.20 %</span></div>
<div class="r"><span>2025.11.17 19:35:24</span><span>xauusd</span><span>261346347</span><span>sell</span><span>0.01</span><span>4032.098</span><span>4044.598</span><span>4017.598</span><span>2025.11.17 19:37:33</span><span>4036.814</span><span class="n">-4.71</span><span class="n">-0.12 %</span></div>
<div class="r s"><span>2025.11.18 02:13:17</span><span>btcusd</span><span>261809807</span><span>sell</span><span>0.03</span><span>91074.00</span><span>91058.39</span><span>90673.00</span><span>2025.11.18 02:14:11</span><span>91065.95</span><span>0.24</span><span>0.01 %</span></div>
<div class="r s"><span>2025.11.18 07:12:06</span><span>xauusd</span><span>261928308</span><span>sell</span><span>0.02</span><span>4004.782</span><span>4004.609</span><span>3990.282</span><span>2025.11.18 07:12:10</span><span>4004.742</span><span>0.08</span><span>0.00 %</span></div>
<div class="r s b"><span>2025.11.19 09:44:23</span><span>xauusd</span><span>262436435</span><span>buy</span><span>0.02</span><span>4097.734</span><span>4097.955</span><span>4112.234</span><span>2025.11.19 09:44:40</span><span>4097.955</span><span>0.44</span><span>0.01 %</span></div>
<div class="r s"><span>2025.11.19 17:33:38</span><span>btcusd</span><span>262337453</span><span>sell</span><span>0.03</span><span>89066.05</span><span>89048.19</span><span>88665.05</span><span>2025.11.19 17:34:11</span><span>89055.93</span><span>0.30</span><span>0.01 %</span></div>
<div class="r s"><span>2025.11.20 08:23:07</span><span>xauusd</span><span>262991791</span><span>sell</span><span>0.02</span><span>4039.805</span><span>4039.737</span><span>4025.305</span><span>2025.11.20 08:23:10</span><span>4039.737</span><span>0.14</span><span>0.00 %</span></div>
<div class="r s"><span>2025.11.20 16:12:38</span><span>btcusd</span><span>262891688</span><span>sell</span><span>0.03</span><span>88486.79</span><span>88393.44</span><span>88085.79</span><span>2025.11.20 16:12:43</span><span>88428.38</span><span>1.75</span><span>0.07 %</span></div>
<div class="r s"><span>2025.11.21 02:44:40</span><span>btcusd</span><span>263449072</span><span>sell</span><span>0.03</span><span>85988.55</span><span>85832.35</span><span>85587.55</span><span>2025.11.21 02:44:43</span><span>85856.25</span><span>3.97</span><span>0.15 %</span></div>
<div class="r s b"><span>2025.11.24 17:56:23</span><span>btcusd</span><span>264211377</span><span>buy</span><span>0.03</span><span>88120.90</span><span>88155.41</span><span>88521.90</span><span>2025.11.24 17:56:31</span><span>88155.41</span><span>1.03</span><span>0.04 %</span></div>
<div class="r s b"><span>2025.11.24 18:37:44</span><span>xauusd</span><span>264304405</span><span>buy</span><span>0.02</span><span>4101.456</span><span>4103.604</span><span>4115.956</span><span>2025.11.24 18:38:01</span><span>4103.512</span><span>4.11</span><span>0.05 %</span></div>
<div class="r s b"><span>2025.11.25 17:33:58</span><span>xauusd</span><span>264761049</span><span>buy</span><span>0.02</span><span>4155.964</span><span>4156.930</span><span>4170.464</span><span>2025.11.25 17:33:59</span><span>4156.930</span><span>1.93</span><span>0.02 %</span></div>
<div class="r x b"><span>2025.11.26 11:32:11</span><span>xauusd</span><span>265241136</span><span>buy</span><span>0.02</span><span>4169.565</span><span>4171.374</span><span>4184.065</span><span>2025.11.26 11:32:13</span><span>4171.374</span><span>3.62</span><span>0.04 %</span></div>
</div>

<svg width="1918" height="1009" viewBox="0 0 1918 1009" xmlns="http://www.w3.org/2000/svg" style="pointer-events:none">
<path d="M177.500 615V639M316.500 615V639M424.500 615V639M516.500 615V639M670.500 615V639M824.500 615V639M978.500 615V639M1132.500 615V639M1272.500 615V639M1426.500 615V639M1802.500 615V639" stroke="#a8a8a8" stroke-width="1.400" fill="none"/>
<path d="M177.500 639V958M316.500 639V958M424.500 639V958M516.500 639V958M670.500 639V958M824.500 639V958M978.500 639V958M1132.500 639V958M1272.500 639V958M1426.500 639V958M1802.500 639V958" stroke="#d4d4d4" fill="none"/>
<path d="M1255 629.500h6.500l-3.250-4z" fill="#222"/>
<text x="1539.600" y="965" font-size="20" fill="#6e6e6e" fill-opacity=".42" textLength="153.400" lengthAdjust="spacingAndGlyphs">Ativar o Windows</text>
<text x="1539.600" y="985.500" font-size="13.500" fill="#6e6e6e" fill-opacity=".42" textLength="299" lengthAdjust="spacingAndGlyphs">Acesse Configurações para ativar o Windows.</text>
</svg>
</div></body></html>
